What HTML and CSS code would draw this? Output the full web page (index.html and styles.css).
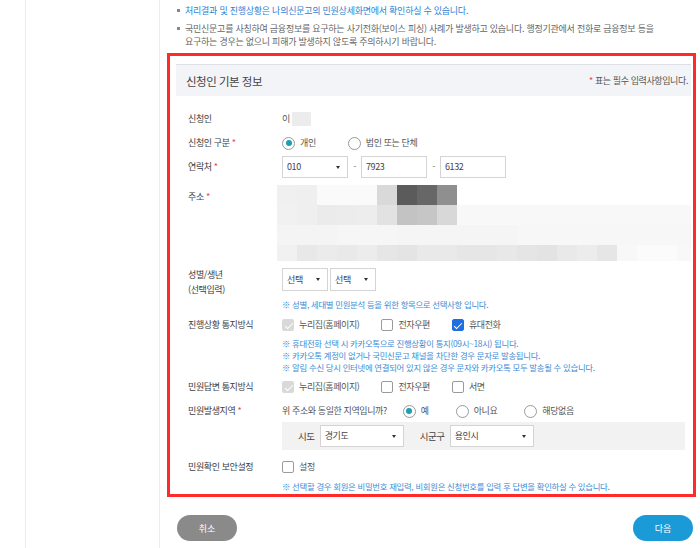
FILE: index.html
```html
<!DOCTYPE html>
<html lang="ko">

<head>
    <meta charset="UTF-8">
    <title>민원신청 - 신청인 기본 정보</title>
    <link rel="stylesheet" href="styles.css">
</head>

<body>
    <div class="page">
        <div class="gutter"></div>
        <div class="sidebar"></div>

        <main class="content">
            <ul class="notice">
                <li class="blue">처리결과 및 진행상황은 나의신문고의 민원상세화면에서 확인하실 수 있습니다.</li>
                <li>국민신문고를 사칭하여 금융정보를 요구하는 사기전화(보이스 피싱) 사례가 발생하고 있습니다. 행정기관에서 전화로 금융정보 등을<br>요구하는 경우는 없으니 피해가 발생하지 않도록 주의하시기 바랍니다.</li>
            </ul>

            <section class="highlight">
                <div class="panel">
                    <div class="panel-head">
                        <h2>신청인 기본 정보</h2>
                        <span class="req-note"><em>*</em> 표는 필수 입력사항입니다.</span>
                    </div>

                    <div class="form">
                        <div class="row r-name">
                            <div class="label">신청인</div>
                            <div class="field">이<span class="masked"></span></div>
                        </div>

                        <div class="row r-type">
                            <div class="label">신청인 구분 <em>*</em></div>
                            <div class="field options wide">
                                <span class="opt"><i class="radio on"></i>개인</span>
                                <span class="opt"><i class="radio"></i>법인 또는 단체</span>
                            </div>
                        </div>

                        <div class="row r-phone">
                            <div class="label">연락처 <em>*</em></div>
                            <div class="field phone">
                                <span class="select phone-first">010</span>
                                <span class="dash">-</span>
                                <span class="input">7923</span>
                                <span class="dash">-</span>
                                <span class="input">6132</span>
                            </div>
                        </div>

                        <div class="row r-addr">
                            <div class="label">주소 <em>*</em></div>
                            <div class="field mosaic">
                                <div class="m1"></div>
                                <div class="m2"></div>
                                <div class="m3"></div>
                                <div class="m4"></div>
                            </div>
                        </div>

                        <div class="row r-gender">
                            <div class="label">성별/생년<br>(선택입력)</div>
                            <div class="field">
                                <div class="pair">
                                    <span class="select small">선택</span>
                                    <span class="select small">선택</span>
                                </div>
                                <p class="note first">※ 성별, 세대별 민원분석 등을 위한 항목으로 선택사항 입니다.</p>
                            </div>
                        </div>

                        <div class="row r-progress">
                            <div class="label">진행상황 통지방식</div>
                            <div class="field">
                                <div class="options">
                                    <span class="opt"><i class="check locked"></i>누리집(홈페이지)</span>
                                    <span class="opt"><i class="check"></i>전자우편</span>
                                    <span class="opt"><i class="check on"></i>휴대전화</span>
                                </div>
                                <p class="note">※ 휴대전화 선택 시 카카오톡으로 진행상황이 통지(09시~18시) 됩니다.<br>※ 카카오톡 계정이 없거나 국민신문고 채널을 차단한 경우 문자로 발송됩니다.<br>※ 알림 수신 당시 인터넷에 연결되어 있지 않은 경우 문자와 카카오톡 모두 발송될 수 있습니다.</p>
                            </div>
                        </div>

                        <div class="row r-answer">
                            <div class="label">민원답변 통지방식</div>
                            <div class="field options">
                                <span class="opt"><i class="check locked"></i>누리집(홈페이지)</span>
                                <span class="opt"><i class="check"></i>전자우편</span>
                                <span class="opt"><i class="check"></i>서면</span>
                            </div>
                        </div>

                        <div class="row r-region">
                            <div class="label">민원발생지역 <em>*</em></div>
                            <div class="field">
                                <div class="options">
                                    <span class="question">위 주소와 동일한 지역입니까?</span>
                                    <span class="opt"><i class="radio on"></i>예</span>
                                    <span class="opt"><i class="radio"></i>아니요</span>
                                    <span class="opt"><i class="radio"></i>해당없음</span>
                                </div>
                                <div class="region-box">
                                    <span class="region-label">시도</span>
                                    <span class="select region">경기도</span>
                                    <span class="region-label">시군구</span>
                                    <span class="select region">용인시</span>
                                </div>
                            </div>
                        </div>

                        <div class="row r-secure">
                            <div class="label">민원확인 보안설정</div>
                            <div class="field">
                                <div class="options">
                                    <span class="opt"><i class="check"></i>설정</span>
                                </div>
                                <p class="note">※ 선택할 경우 회원은 비밀번호 재입력, 비회원은 신청번호를 입력 후 답변을 확인하실 수 있습니다.</p>
                            </div>
                        </div>
                    </div>
                </div>
            </section>

            <div class="actions">
                <button class="btn cancel">취소</button>
                <button class="btn next">다음</button>
            </div>
        </main>
    </div>
</body>

</html>
```

FILE: styles.css
```css
* {
    box-sizing: border-box;
}

body {
    margin: 0;
    background-color: #fff;
    font-family: "Noto Sans CJK KR", "Noto Sans", sans-serif;
    font-size: 9px;
    letter-spacing: -0.4px;
    color: #555;
}

.page {
    display: flex;
    min-height: 548px;
}

.gutter {
    flex-shrink: 0;
    width: 26px;
    border-right: 1px solid #ececec;
}

.sidebar {
    flex-shrink: 0;
    width: 134px;
    border-right: 1px solid #ececec;
}

.content {
    flex: 1;
    min-width: 0;
    padding: 4px 4px 0 7px;
}

/* 안내문 */
.notice {
    list-style: none;
    margin: 0 0 5px 0;
    padding-left: 10px;
    font-size: 9px;
    letter-spacing: -0.25px;
    line-height: 13px;
    color: #666;
}

.notice li {
    position: relative;
    padding-left: 8px;
    margin-bottom: 5px;
}

.notice li:last-child {
    margin-bottom: 0;
}

.notice li::before {
    content: "";
    position: absolute;
    left: 0;
    top: 5px;
    width: 3px;
    height: 3px;
    background-color: #888;
}

.notice .blue {
    color: #2f7fd3;
}

/* 빨간 강조 테두리 */
.highlight {
    border: 3px solid #ff2b2b;
    padding: 8px 2px 2px 6px;
}

.panel {
    overflow: hidden;
}

.panel-head {
    display: flex;
    justify-content: space-between;
    align-items: center;
    height: 32px;
    padding: 0 3px 0 10px;
    background-color: #f3f4f7;
    border-top: 1px solid #dfe0e5;
}

.panel-head h2 {
    margin: 0;
    font-size: 11.5px;
    letter-spacing: -0.5px;
    font-weight: normal;
    color: #444;
}

.req-note {
    font-size: 9px;
    color: #555;
}

em {
    font-style: normal;
    color: #e8474b;
}

/* 폼 */
.form {
    padding: 16px 0 0 12px;
}

.row {
    display: flex;
    line-height: 14px;
}

.label {
    width: 94px;
    flex-shrink: 0;
    color: #3d3d3d;
}

.field {
    flex: 1;
}

.r-type { margin-top: 10px; }
.r-phone { margin-top: 6px; align-items: center; }
.r-addr { margin-top: 7px; }
.r-addr .label { padding-top: 5px; }
.r-gender { margin-top: 7px; }
.r-gender .label { line-height: 14.5px; }
.r-progress { margin-top: 8px; }
.r-answer { margin-top: 7px; }
.r-region { margin-top: 10px; }
.r-secure { margin-top: 10px; }

.masked {
    display: inline-block;
    width: 19px;
    height: 14px;
    margin-left: 2px;
    vertical-align: top;
    background-color: #ececec;
}

.options {
    display: flex;
    align-items: center;
}

.opt {
    display: flex;
    align-items: center;
    margin-right: 22px;
}

.wide .opt {
    margin-right: 32px;
}

.r-region .opt {
    margin-right: 27px;
}

.question {
    margin-right: 16px;
}

.check,
.radio {
    display: inline-block;
    position: relative;
    width: 12px;
    height: 12px;
    margin-right: 5px;
    border: 1px solid #9a9a9a;
    background-color: #fff;
}

.check {
    border-radius: 2px;
}

.radio {
    border-radius: 50%;
    width: 13px;
    height: 13px;
}

.radio.on::after {
    content: "";
    position: absolute;
    left: 2.5px;
    top: 2.5px;
    width: 6px;
    height: 6px;
    border-radius: 50%;
    background-color: #1aa0b3;
}

.check.on {
    background-color: #1f6fe0;
    border-color: #1f6fe0;
}

.check.locked {
    background-color: #d9d9d9;
    border-color: #d9d9d9;
}

.check.on::after,
.check.locked::after {
    content: "";
    position: absolute;
    left: 3.5px;
    top: 0.5px;
    width: 3px;
    height: 7px;
    border: solid #fff;
    border-width: 0 1.6px 1.6px 0;
    transform: rotate(45deg);
}

/* 입력칸 */
.phone {
    display: flex;
    align-items: center;
}

.select,
.input {
    display: inline-flex;
    align-items: center;
    position: relative;
    height: 22px;
    padding-left: 4px;
    border: 1px solid #d4d4d4;
    background-color: #fff;
    color: #444;
    vertical-align: middle;
}

.select::after {
    content: "";
    position: absolute;
    right: 7px;
    top: 9px;
    border-left: 2.5px solid transparent;
    border-right: 2.5px solid transparent;
    border-top: 3px solid #333;
}

.phone-first {
    width: 66px;
}

.input {
    width: 66px;
}

.dash {
    width: 13px;
    text-align: center;
    color: #777;
}

.pair {
    display: flex;
    gap: 2px;
}

.select.small {
    width: 46px;
    height: 23px;
}

.note {
    margin: 0;
    font-size: 8.4px;
    letter-spacing: -0.3px;
    line-height: 11.8px;
    color: #3c8bd6;
}

.r-gender .note {
    margin-top: 7px;
    line-height: 12px;
}

.r-progress .note {
    margin-top: 6px;
}

.r-secure .note {
    margin-top: 6px;
    line-height: 12px;
}

/* 주소 모자이크 */
.mosaic {
    margin-left: -5px;
    height: 76px;
}

.mosaic div {
    height: 20px;
    width: 430px;
}

.mosaic .m4 {
    height: 16px;
}

.m1 {
    width: 180px !important;
    background: linear-gradient(to right,
        #f0f0f0 0 20px, #efefef 20px 40px, #fafafa 40px 100px,
        #d9d9d9 100px 120px, #5b5b5b 120px 140px, #676767 140px 160px,
        #8f8f8f 160px 180px);
}

.m2 {
    background: linear-gradient(to right,
        #f1f1f1 0 20px, #efefef 20px 40px, #ebebeb 40px 60px,
        #ececec 60px 80px, #ededed 80px 100px, #e2e2e2 100px 120px,
        #c3c3c3 120px 140px, #c6c6c6 140px 160px, #d8d8d8 160px 180px,
        #f8f8f8 180px 100%);
}

.m3 {
    background: linear-gradient(to right,
        #f4f4f4 0 60px, #f6f6f6 60px 120px, #f5f5f5 120px 240px,
        #f7f7f7 240px 100%);
}

.m4 {
    background: linear-gradient(to right,
        #f1f1f1 0 20px, #e8e8e8 20px 40px, #ebebeb 40px 60px,
        #e9e9e9 60px 80px, #ececec 80px 100px, #e6e6e6 100px 120px,
        #e4e4e4 120px 140px, #e9e9e9 140px 180px, #e6e6e6 180px 220px,
        #e8e8e8 220px 240px, #e5e5e5 240px 260px, #e3e3e3 260px 280px,
        #e9e9e9 280px 300px, #ececec 300px 320px, #e6e6e6 320px 340px,
        #f8f8f8 340px 360px, #fbfbfb 360px 400px, #f8f8f8 400px 100%);
}

/* 민원발생지역 */
.region-box {
    display: flex;
    align-items: center;
    width: 403px;
    height: 28px;
    margin-top: 4px;
    background-color: #f2f2f2;
}

.region-label {
    margin: 0 5px 0 16px;
    color: #444;
    font-size: 9.5px;
}

.select.region {
    width: 84px;
}

/* 버튼 */
.actions {
    display: flex;
    justify-content: space-between;
    padding: 0 3px 0 10px;
    margin-top: 18px;
}

.btn {
    width: 60px;
    height: 26px;
    border: none;
    border-radius: 13px;
    color: #fff;
    font-family: inherit;
    font-size: 9px;
}

.cancel {
    background-color: #8a8a8a;
}

.next {
    background-color: #1b9ad8;
}
```
